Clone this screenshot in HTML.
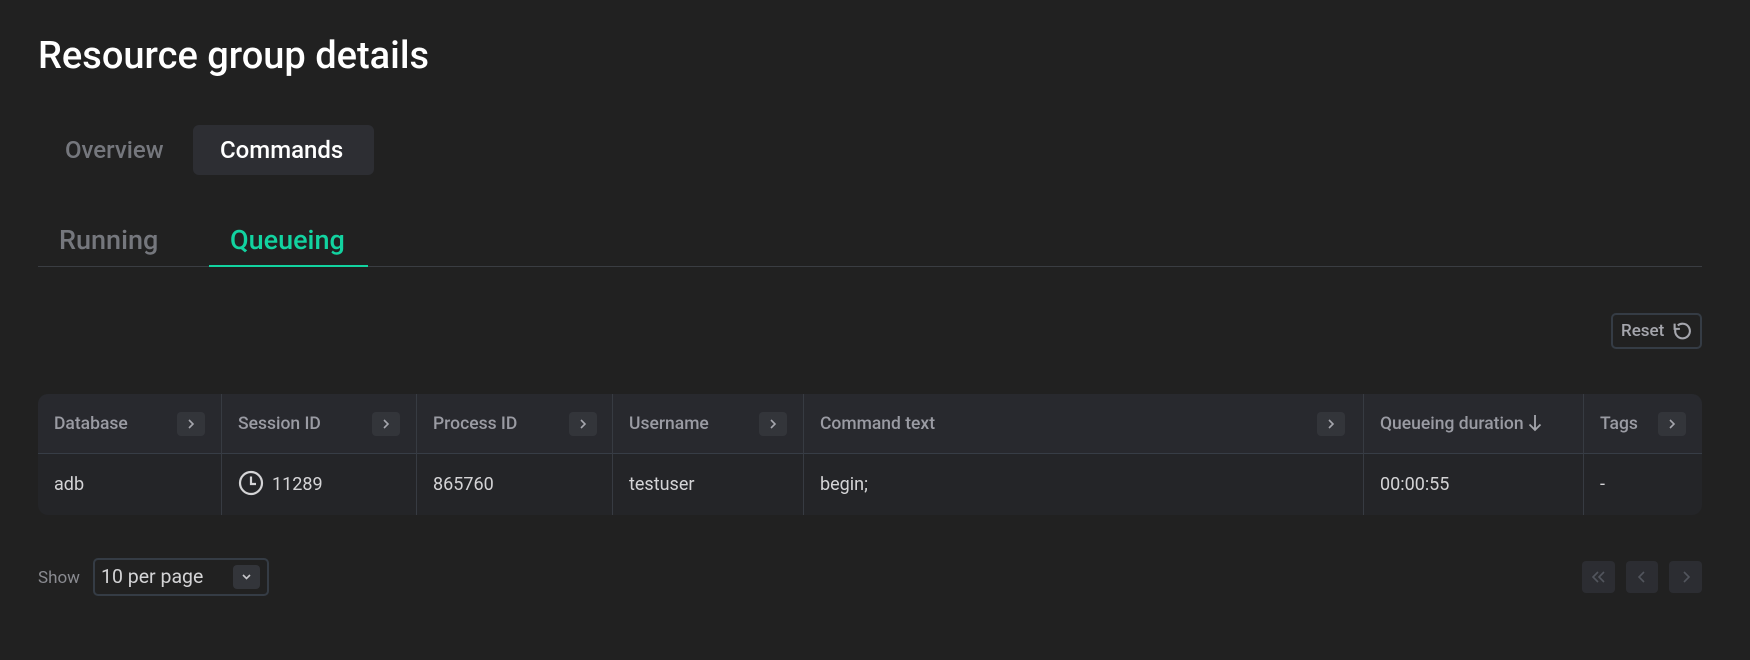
<!DOCTYPE html>
<html><head><meta charset="utf-8"><style>
*{margin:0;padding:0;box-sizing:border-box}
body{width:1750px;height:660px;background:#212121;font-family:"Roboto","Liberation Sans",sans-serif;position:relative;overflow:hidden;color:#ddd}
.a{position:absolute;white-space:nowrap}
.title{left:38px;top:28px;font-size:38px;font-weight:500;color:#fff;line-height:56px}
.tab{font-size:24px;font-weight:500;line-height:56px}
.chev{position:absolute;width:28px;height:24px;border-radius:4px;background:#33353a;top:18px}
.chev svg{position:absolute;left:9px;top:7px}
.th{position:absolute;top:0;height:60px;line-height:60px;font-size:17.5px;font-weight:500;color:#9a9ba3;padding-left:16px;border-left:1px solid #373b42}
.td{position:absolute;top:60px;height:61px;line-height:61px;font-size:18px;color:#d4d4d6;padding-left:16px;border-left:1px solid #373b42}
.pg{position:absolute;top:561px;width:33px;height:32px;border-radius:4px;background:#2c2d32}
</style></head><body>
<div class="a title">Resource group details</div>
<div class="a tab" style="left:65px;top:122px;color:#75777d">Overview</div>
<div class="a" style="left:193px;top:125px;width:181px;height:50px;background:#2d2e33;border-radius:6px"></div>
<div class="a tab" style="left:220px;top:122px;color:#fff">Commands</div>
<div class="a" style="left:59px;top:220px;font-size:27px;font-weight:500;line-height:40px;color:#75777d">Running</div>
<div class="a" style="left:230px;top:220px;font-size:27px;font-weight:500;line-height:40px;color:#12d3a0">Queueing</div>
<div class="a" style="left:38px;top:266px;width:1664px;height:1px;background:#3a3d42"></div>
<div class="a" style="left:209px;top:265px;width:159px;height:2px;background:#12d3a0"></div>

<div class="a" style="left:1611px;top:313px;width:91px;height:36px;border:2px solid #353c45;border-radius:5px;font-size:17px;font-weight:500;color:#a5a6ad;line-height:32px;padding-left:8px">Reset
<svg style="position:absolute;left:59px;top:6px" width="21" height="21" viewBox="0 0 20 20"><path d="M5.5 4.2A7 7 0 1 1 3.2 8" fill="none" stroke="#a5a6ad" stroke-width="2"/><path d="M2.5 2.5v5h5" fill="none" stroke="#a5a6ad" stroke-width="2"/></svg></div>

<div class="a" style="left:38px;top:394px;width:1664px;height:121px;border-radius:10px;background:#242528;overflow:hidden">
<div style="position:absolute;left:0;top:0;width:100%;height:60px;background:#28292e;border-bottom:1px solid #373d46"></div>
<div class="th" style="left:0;width:183px;border-left:0">Database<div class="chev" style="left:139px"><svg width="10" height="10" viewBox="0 0 10 10"><path d="M3 1l4 4-4 4" fill="none" stroke="#a5a6ad" stroke-width="1.6"/></svg></div></div>
<div class="th" style="left:183px;width:195px">Session ID<div class="chev" style="left:150px"><svg width="10" height="10" viewBox="0 0 10 10"><path d="M3 1l4 4-4 4" fill="none" stroke="#a5a6ad" stroke-width="1.6"/></svg></div></div>
<div class="th" style="left:378px;width:196px">Process ID<div class="chev" style="left:152px"><svg width="10" height="10" viewBox="0 0 10 10"><path d="M3 1l4 4-4 4" fill="none" stroke="#a5a6ad" stroke-width="1.6"/></svg></div></div>
<div class="th" style="left:574px;width:191px">Username<div class="chev" style="left:146px"><svg width="10" height="10" viewBox="0 0 10 10"><path d="M3 1l4 4-4 4" fill="none" stroke="#a5a6ad" stroke-width="1.6"/></svg></div></div>
<div class="th" style="left:765px;width:560px">Command text<div class="chev" style="left:513px"><svg width="10" height="10" viewBox="0 0 10 10"><path d="M3 1l4 4-4 4" fill="none" stroke="#a5a6ad" stroke-width="1.6"/></svg></div></div>
<div class="th" style="left:1325px;width:220px">Queueing duration <svg style="vertical-align:-3px" width="14" height="18" viewBox="0 0 14 18"><path d="M7 1v15M1.5 10.5L7 16l5.5-5.5" fill="none" stroke="#a5a6ad" stroke-width="1.8"/></svg></div>
<div class="th" style="left:1545px;width:119px">Tags<div class="chev" style="left:74px"><svg width="10" height="10" viewBox="0 0 10 10"><path d="M3 1l4 4-4 4" fill="none" stroke="#a5a6ad" stroke-width="1.6"/></svg></div></div>
<div class="td" style="left:0;width:183px;border-left:0">adb</div>
<div class="td" style="left:183px;width:195px"><svg style="vertical-align:-6px;margin-right:8px" width="26" height="26" viewBox="0 0 26 26"><circle cx="13" cy="13" r="11" fill="none" stroke="#d4d4d6" stroke-width="2.2"/><path d="M13 6.5V14h5" fill="none" stroke="#d4d4d6" stroke-width="2.2"/></svg>11289</div>
<div class="td" style="left:378px;width:196px">865760</div>
<div class="td" style="left:574px;width:191px">testuser</div>
<div class="td" style="left:765px;width:560px">begin;</div>
<div class="td" style="left:1325px;width:220px">00:00:55</div>
<div class="td" style="left:1545px;width:119px">-</div>
</div>

<div class="a" style="left:38px;top:566px;font-size:17px;line-height:24px;color:#8a8b91">Show</div>
<div class="a" style="left:93px;top:558px;width:176px;height:38px;border:2px solid #353c45;border-radius:5px;font-size:19.5px;line-height:34px;color:#d4d4d6;padding-left:6px">10 per page
<div style="position:absolute;left:138px;top:5px;width:27px;height:24px;border-radius:4px;background:#33353a"><svg style="position:absolute;left:8px;top:7px" width="11" height="10" viewBox="0 0 11 10"><path d="M2 3l3.5 3.5L9 3" fill="none" stroke="#c8c8cc" stroke-width="1.6"/></svg></div></div>

<div class="pg" style="left:1582px"><svg style="position:absolute;left:9px;top:9px" width="15" height="14" viewBox="0 0 15 14"><path d="M7 2L2 7l5 5M13 2L8 7l5 5" fill="none" stroke="#52555d" stroke-width="1.6"/></svg></div>
<div class="pg" style="left:1626px;width:32px"><svg style="position:absolute;left:11px;top:9px" width="10" height="14" viewBox="0 0 10 14"><path d="M7 2L2 7l5 5" fill="none" stroke="#52555d" stroke-width="1.6"/></svg></div>
<div class="pg" style="left:1669px"><svg style="position:absolute;left:12px;top:9px" width="10" height="14" viewBox="0 0 10 14"><path d="M3 2l5 5-5 5" fill="none" stroke="#52555d" stroke-width="1.6"/></svg></div>
</body></html>
